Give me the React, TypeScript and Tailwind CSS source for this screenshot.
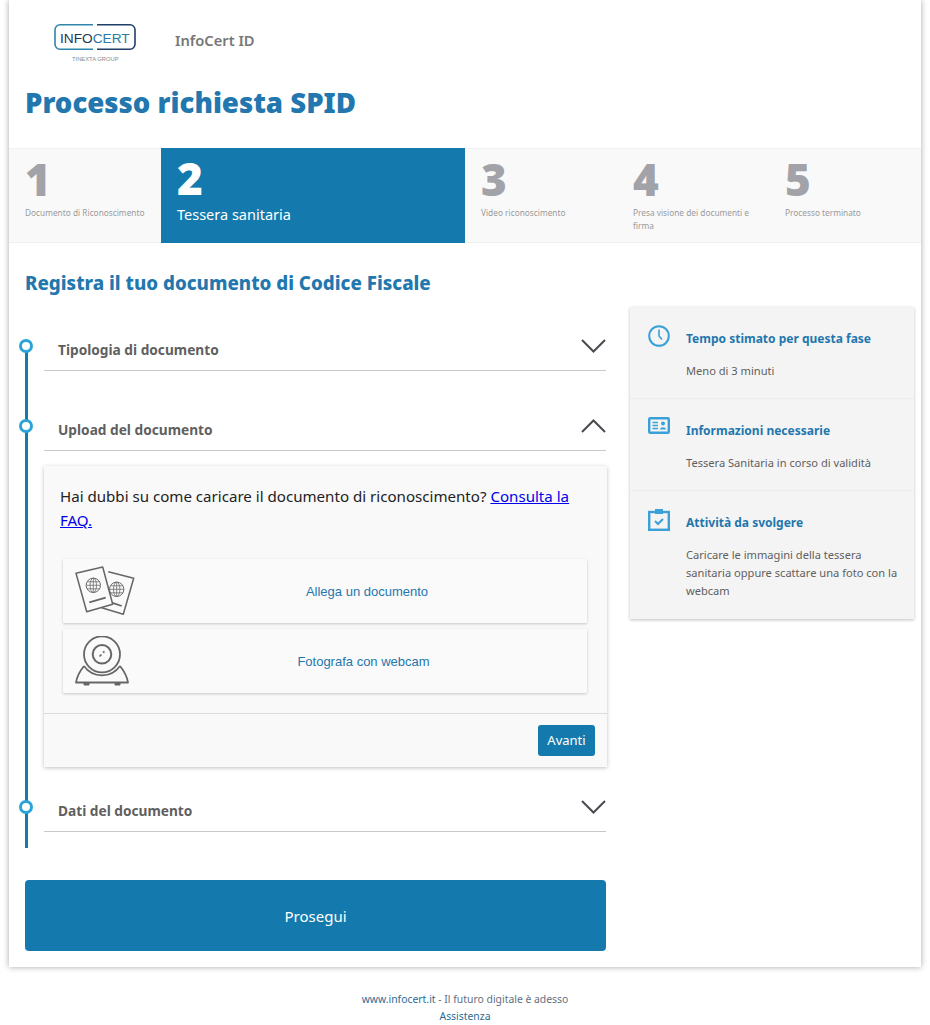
import React from "react";

const Chevron = ({ up = false }: { up?: boolean }) => (
  <svg width="25" height="15" viewBox="0 0 25 15" fill="none" className="shrink-0">
    <path d={up ? "M1 14L12.5 2.5L24 14" : "M1 2L12.5 13.5L24 2"} stroke="#4a4a52" strokeWidth="2" />
  </svg>
);

const Dot = () => (
  <span className="absolute left-[-25px] top-[9px] w-[14px] h-[14px] rounded-full bg-white border-[3px] border-[#2aa3d8]" />
);

const Row = ({ title, up = false, className = "" }: { title: string; up?: boolean; className?: string }) => (
  <div className={`relative h-[41px] border-b border-[#c8c8c8] flex justify-between pl-[14px] ${className}`}>
    <Dot />
    <span className="text-[13.7px] leading-[18px] font-bold text-[#5f5f5f] mt-[11px]">{title}</span>
    <span className="mt-[8px]"><Chevron up={up} /></span>
  </div>
);

const Logo = () => (
  <svg width="84" height="40" viewBox="0 0 84 40" className="shrink-0">
    <path d="M39 .8H6a5 5 0 0 0-5 5v14.4a5 5 0 0 0 5 5h33" fill="none" stroke="#2e86ad" strokeWidth="1.6" />
    <path d="M43 .8h33a5 5 0 0 1 5 5v14.4a5 5 0 0 1-5 5H43" fill="none" stroke="#1f3f66" strokeWidth="1.6" />
    <text x="6" y="18.5" fontSize="13.7" fontFamily="'Liberation Sans', sans-serif" fill="#1c3557">INFO<tspan fill="#2a6f9e">C</tspan><tspan fill="#2b7ba3">ERT</tspan></text>
    <text x="18" y="36.5" fontSize="5.8" fontFamily="'Liberation Sans', sans-serif" fill="#8a8a8a">TINEXTA GROUP</text>
  </svg>
);

const Globe = ({ cx, cy }: { cx: number; cy: number }) => (
  <g stroke="#6a6a6a" strokeWidth="0.8" fill="none">
    <circle cx={cx} cy={cy} r="7.2" strokeWidth="1" />
    <ellipse cx={cx} cy={cy} rx="3.2" ry="7.2" />
    <path d={`M${cx - 7} ${cy}h14M${cx - 6.2} ${cy - 3.5}h12.4M${cx - 6.2} ${cy + 3.5}h12.4M${cx} ${cy - 7}v14`} />
  </g>
);

const Passports = () => (
  <svg width="60" height="50" viewBox="0 0 60 50" fill="none" className="shrink-0">
    <path d="M33.3 5.7L58.7 12.3L48.3 48.3L26.7 41.7" stroke="#666" strokeWidth="1.5" strokeLinejoin="round" />
    <Globe cx={41.7} cy={23.3} />
    <path d="M36.7 36.7L46.7 40" stroke="#666" strokeWidth="1.8" />
    <path d="M1 7.3L27.7 1L37.7 38.3L11.7 45.7Z" fill="#fafafa" stroke="#666" strokeWidth="1.5" strokeLinejoin="round" />
    <Globe cx={18.3} cy={19.3} />
    <path d="M14.3 36.3L30.7 31.7" stroke="#666" strokeWidth="1.8" />
  </svg>
);

const Webcam = () => (
  <svg width="54" height="50" viewBox="0 0 54 50" fill="none" className="shrink-0">
    <path d="M9 30C5 35 2 40 1 46.5H53C52 40 49 35 45 30" stroke="#666" strokeWidth="1.8" strokeLinejoin="round" />
    <path d="M9 46.5v2.5h5v-2.5M40 46.5v2.5h5v-2.5" fill="#666" stroke="#666" />
    <path d="M9 30A22 22 0 0 0 45 30" stroke="#666" strokeWidth="1.6" />
    <circle cx="27" cy="18.3" r="18" stroke="#666" strokeWidth="1.8" fill="#fafafa" />
    <circle cx="27" cy="18.3" r="9.3" stroke="#666" strokeWidth="2" />
    <path d="M24.5 20.5l2-2M28 16.5l1.5-1" stroke="#666" strokeWidth="1.6" />
  </svg>
);

const ClockIcon = () => (
  <svg width="22" height="22" viewBox="0 0 22 22" fill="none">
    <circle cx="11" cy="11" r="9.8" stroke="#3aa0d8" strokeWidth="2" />
    <path d="M11 4.5V11L14 14.5" stroke="#3aa0d8" strokeWidth="1.6" />
  </svg>
);

const CardIcon = () => (
  <svg width="22" height="17" viewBox="0 0 22 17" fill="none">
    <rect x="1.2" y="1.2" width="19.6" height="14.6" rx="1" stroke="#3aa0d8" strokeWidth="2.4" />
    <path d="M4.5 5.5h5.5M4.5 8.5h5.5M4.5 11.5h5.5" stroke="#3aa0d8" strokeWidth="1.5" />
    <circle cx="15" cy="6.5" r="2" fill="#3aa0d8" />
    <path d="M12 12.5c0-3 6-3 6 0z" fill="#3aa0d8" />
  </svg>
);

const ClipboardIcon = () => (
  <svg width="22" height="22" viewBox="0 0 22 22" fill="none">
    <rect x="1.2" y="3" width="19.6" height="17.8" stroke="#3aa0d8" strokeWidth="2.4" />
    <rect x="7" y="0" width="8" height="5" fill="#3aa0d8" />
    <path d="M7 12l3 3 5-5" stroke="#3aa0d8" strokeWidth="2" />
  </svg>
);

const Info = ({ icon, title, children, className = "" }: { icon: React.ReactNode; title: string; children: React.ReactNode; className?: string }) => (
  <div className={`flex border-b border-[#ececec] last:border-b-0 pl-[18px] pr-[12px] ${className}`}>
    <div className="w-[38px] shrink-0 pt-[18px]">{icon}</div>
    <div className="pt-[23px]">
      <h3 className="text-[12px] leading-[18px] font-bold text-[#1f77ae]">{title}</h3>
      <p className="text-[11.1px] leading-[18px] text-[#5f5f5f] mt-[14px]">{children}</p>
    </div>
  </div>
);

const Step = ({ n, label }: { n: string; label: string }) => (
  <div className="pl-[16px] pr-[16px] pt-[6px]">
    <div className="text-[44px] leading-[48px] font-black text-[#a2a3a8]">{n}</div>
    <div className="text-[8.3px] leading-[13px] text-[#9a9a9a] mt-[3px]">{label}</div>
  </div>
);

const Attach = ({ icon, label, w }: { icon: React.ReactNode; label: string; w: string }) => (
  <button className="h-[64px] bg-[#fafafa] shadow-[0_1px_3px_rgba(0,0,0,0.2)] flex items-center rounded-[1px]">
    <span className={`pl-[12px] flex items-center ${w}`}>{icon}</span>
    <span className="flex-1 text-center pt-[2px] text-[13px] text-[#1f77ae] font-['Liberation_Sans',sans-serif]">{label}</span>
  </button>
);

export default function App() {
  return (
    <div className="bg-white w-[930px] h-[1025px] overflow-hidden font-['Noto_Sans',sans-serif]">
      <div className="ml-[9px] w-[912px] h-[967px] bg-white shadow-[0_0_6px_rgba(0,0,0,0.35)]">
        <header className="flex items-start pt-[24px] pl-[45px] h-[68px]">
          <Logo />
          <span className="ml-[37px] mt-[6px] text-[14.7px] leading-[20px] font-semibold text-[#777]">InfoCert ID</span>
        </header>
        <h1 className="pl-[16px] mt-[15px] h-[65px] text-[27.6px] leading-[38px] font-black text-[#2277ae]">Processo richiesta SPID</h1>

        <nav className="grid grid-cols-6 h-[95px] bg-[#f9f9f9] border-y border-[#f0f0f0]">
          <Step n="1" label="Documento di Riconoscimento" />
          <div className="col-span-2 bg-[#147aad] text-white pl-[16px] pt-[6px] -my-px">
            <div className="text-[44px] leading-[48px] font-black">2</div>
            <div className="text-[14.5px] leading-[20px] mt-[2px]">Tessera sanitaria</div>
          </div>
          <Step n="3" label="Video riconoscimento" />
          <Step n="4" label="Presa visione dei documenti e firma" />
          <Step n="5" label="Processo terminato" />
        </nav>

        <h2 className="pl-[16px] mt-[26px] text-[18.75px] leading-[28px] font-extrabold text-[#2277ae]">Registra il tuo documento di Codice Fiscale</h2>

        <div className="flex mt-[10px] pl-[16px] items-start">
          <div className="w-[581px] relative pt-[23px] pb-[16px] pl-[19px]">
            <span className="absolute left-0 top-[39px] bottom-0 w-[3px] bg-[#147aad]" />
            <Row title="Tipologia di documento" />
            <Row title="Upload del documento" up className="mt-[39px]" />
            <div className="mt-[15px] w-[563px] h-[301px] bg-[#f9f9f9] shadow-[0_1px_4px_rgba(0,0,0,0.25)] flex flex-col">
              <p className="px-[16px] pt-[18px] text-[15.1px] leading-[24px] text-[#222]">
                Hai dubbi su come caricare il documento di riconoscimento?{" "}
                <a href="#" className="text-[#0000ee] underline">Consulta la FAQ.</a>
              </p>
              <div className="flex flex-col gap-[6px] mt-[27px] ml-[19px] w-[524px]">
                <Attach icon={<Passports />} label="Allega un documento" w="w-[84px]" />
                <Attach icon={<Webcam />} label="Fotografa con webcam" w="w-[77px]" />
              </div>
              <div className="mt-[20px] flex-1 border-t border-[#dcdcdc] flex justify-end pr-[12px] pt-[11px]">
                <button className="w-[57px] h-[31px] pt-[1px] rounded-[3px] bg-[#147aad] text-white text-[13px]">Avanti</button>
              </div>
            </div>
            <Row title="Dati del documento" className="mt-[24px]" />
          </div>

          <aside className="ml-[24px] mt-0 w-[284px] bg-[#f4f4f4] shadow-[0_1px_3px_rgba(0,0,0,0.25)]">
            <Info icon={<ClockIcon />} title="Tempo stimato per questa fase" className="h-[92px]">Meno di 3 minuti</Info>
            <Info icon={<CardIcon />} title="Informazioni necessarie" className="h-[92px]">Tessera Sanitaria in corso di validità</Info>
            <Info icon={<ClipboardIcon />} title="Attività da svolgere" className="h-[128px]">Caricare le immagini della tessera sanitaria oppure scattare una foto con la webcam</Info>
          </aside>
        </div>

        <button className="block ml-[16px] mt-[32px] w-[581px] h-[71px] pt-[2px] rounded-[4px] bg-[#147aad] text-white text-[15px]">Prosegui</button>
      </div>

      <footer className="text-center text-[10.4px] leading-[17px] text-[#5f6f7f] mt-[24px]">
        <div><a href="#" className="text-[#2b6c96]">www.infocert.it</a> - Il futuro digitale è adesso</div>
        <div><a href="#" className="text-[#2b6c96]">Assistenza</a></div>
      </footer>
    </div>
  );
}
